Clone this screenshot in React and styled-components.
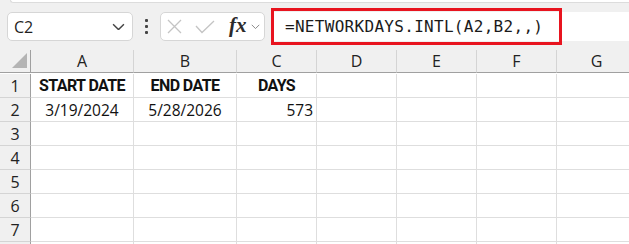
import React from 'react';
import styled, { createGlobalStyle } from 'styled-components';

const Global = createGlobalStyle`
  html, body { margin: 0; padding: 0; background: #ffffff; overflow: hidden; }
  body { font-family: "Open Sans", "Liberation Sans", sans-serif; }
`;

const Page = styled.div`
  width: 629px;
  height: 244px;
  overflow: hidden;
  background: #ffffff;
`;

const Band = styled.div`
  background: #f0f0f0;
  height: 50px;
  display: flex;
  flex-direction: column;
`;

const RibbonEdge = styled.div`
  margin-left: 10px;
  height: 2px;
  background: #ffffff;
  border: 1px solid #dcdcdc;
  border-top: none;
  border-right: none;
  border-bottom-left-radius: 5px;
`;

const BarRow = styled.div`
  display: flex;
  align-items: center;
  height: 29px;
  margin-top: 9px;
  padding-left: 7px;
`;

const NameBox = styled.div`
  box-sizing: border-box;
  width: 126px;
  height: 29px;
  background: #ffffff;
  border: 1px solid #d6d6d6;
  border-radius: 5px;
  display: flex;
  align-items: center;
  justify-content: space-between;
  padding: 0 7px 0 6px;
  font-size: 16px;
  color: #1f1f1f;
`;

const Dots = styled.div`
  width: 27px;
  display: flex;
  flex-direction: column;
  align-items: center;
  gap: 3px;
  span {
    width: 3px;
    height: 3px;
    background: #444;
    border-radius: 1px;
  }
`;

const ToolBox = styled.div`
  box-sizing: border-box;
  width: 105px;
  height: 29px;
  background: #ffffff;
  border: 1px solid #d6d6d6;
  border-radius: 5px;
  display: flex;
  align-items: center;
  padding-left: 6px;
`;

const Fx = styled.span`
  font-family: "Liberation Serif", "DejaVu Serif", serif;
  font-style: italic;
  font-weight: 700;
  font-size: 21px;
  color: #2b2b2b;
  margin-left: 14px;
  line-height: 1;
  margin-top: -3px;
`;

const FormulaField = styled.div`
  flex: 1;
  height: 29px;
  margin-left: 6px;
  background: #ffffff;
  display: flex;
  align-items: center;
`;

const Highlight = styled.div`
  box-sizing: border-box;
  width: 291px;
  height: 37px;
  border: 3px solid #e8141f;
  display: flex;
  align-items: center;
  padding-left: 11px;
  font-family: "DejaVu Sans Mono", "Liberation Mono", monospace;
  font-size: 16px;
  letter-spacing: 0.3px;
  color: #1a1a1a;
`;

const Grid = styled.div`
  display: grid;
  grid-template-columns: 31px 103px 103px 80px 80px 80px 80px 80px;
  grid-auto-rows: 24px;
  font-family: "Open Sans", "Liberation Sans", sans-serif;
`;

const ColHead = styled.div`
  box-sizing: border-box;
  height: 23px;
  background: #f0f0f0;
  border-right: 1px solid ${p => (p.$corner ? '#a0a0a0' : '#d4d4d4')};
  border-bottom: 1px solid #a0a0a0;
  display: flex;
  align-items: center;
  justify-content: center;
  font-size: 16px;
  color: #222;
  position: relative;
`;

const Corner = styled.div`
  position: absolute;
  right: 3px;
  bottom: 4px;
  width: 0;
  height: 0;
  border-left: 15px solid transparent;
  border-bottom: 15px solid #b4b4b4;
`;

const RowHead = styled.div`
  box-sizing: border-box;
  background: #f0f0f0;
  border-right: 1px solid #a0a0a0;
  border-bottom: 1px solid #d4d4d4;
  display: flex;
  align-items: center;
  justify-content: center;
  font-size: 16px;
  color: #222;
`;

const Cell = styled.div`
  box-sizing: border-box;
  border-right: 1px solid #dedede;
  border-bottom: 1px solid #dedede;
  display: flex;
  align-items: center;
  justify-content: ${p => (p.$align === 'right' ? 'flex-end' : 'center')};
  padding-right: ${p => (p.$align === 'right' ? '3px' : '0')};
  font-size: ${p => (p.$bold ? '16px' : '15.5px')};
  font-weight: ${p => (p.$bold ? 700 : 400)};
  letter-spacing: ${p => (p.$bold ? '-0.6px' : '0')};
  font-family: ${p => (p.$bold ? '"Roboto", "Liberation Sans", sans-serif' : 'inherit')};
  color: #111;
`;

const Chevron = ({ size = 12, color = '#444' }) => (
  <svg width={size} height={size * 0.6} viewBox="0 0 12 7">
    <path d="M1 1 L6 6 L11 1" fill="none" stroke={color} strokeWidth="1.3" />
  </svg>
);

const columns = ['A', 'B', 'C', 'D', 'E', 'F', 'G'];
const rows = [1, 2, 3, 4, 5, 6, 7, 8];
const data = {
  1: [{ t: 'START DATE', bold: true }, { t: 'END DATE', bold: true }, { t: 'DAYS', bold: true }],
  2: [{ t: '3/19/2024' }, { t: '5/28/2026' }, { t: '573', align: 'right' }],
};

export default function App() {
  return (
    <Page>
      <Global />
      <Band>
        <RibbonEdge />
        <BarRow>
          <NameBox>
            <span>C2</span>
            <Chevron size={13} />
          </NameBox>
          <Dots>
            <span />
            <span />
            <span />
          </Dots>
          <ToolBox>
            <svg width="15" height="15" viewBox="0 0 15 15">
              <path d="M1 1 L14 14 M14 1 L1 14" stroke="#c4c4c4" strokeWidth="1.3" fill="none" />
            </svg>
            <svg width="20" height="14" viewBox="0 0 20 14" style={{ marginLeft: 13 }}>
              <path d="M1 6 L7 12.5 L19 1" stroke="#c4c4c4" strokeWidth="1.3" fill="none" />
            </svg>
            <Fx>fx</Fx>
            <span style={{ marginLeft: 4, display: 'flex' }}>
              <Chevron size={9} color="#888" />
            </span>
          </ToolBox>
          <FormulaField>
            <Highlight>=NETWORKDAYS.INTL(A2,B2,,)</Highlight>
          </FormulaField>
        </BarRow>
      </Band>
      <Grid>
        <ColHead $corner>
          <Corner />
        </ColHead>
        {columns.map(c => (
          <ColHead key={c}>{c}</ColHead>
        ))}
        {rows.map(r => (
          <React.Fragment key={r}>
            {/* row 8 sits below the fold; its number is never visible */}
            <RowHead>{r < 8 ? r : ''}</RowHead>
            {columns.map((c, i) => {
              const d = data[r] && data[r][i];
              return (
                <Cell key={c} $bold={d?.bold} $align={d?.align}>
                  {d?.t}
                </Cell>
              );
            })}
          </React.Fragment>
        ))}
      </Grid>
    </Page>
  );
}
